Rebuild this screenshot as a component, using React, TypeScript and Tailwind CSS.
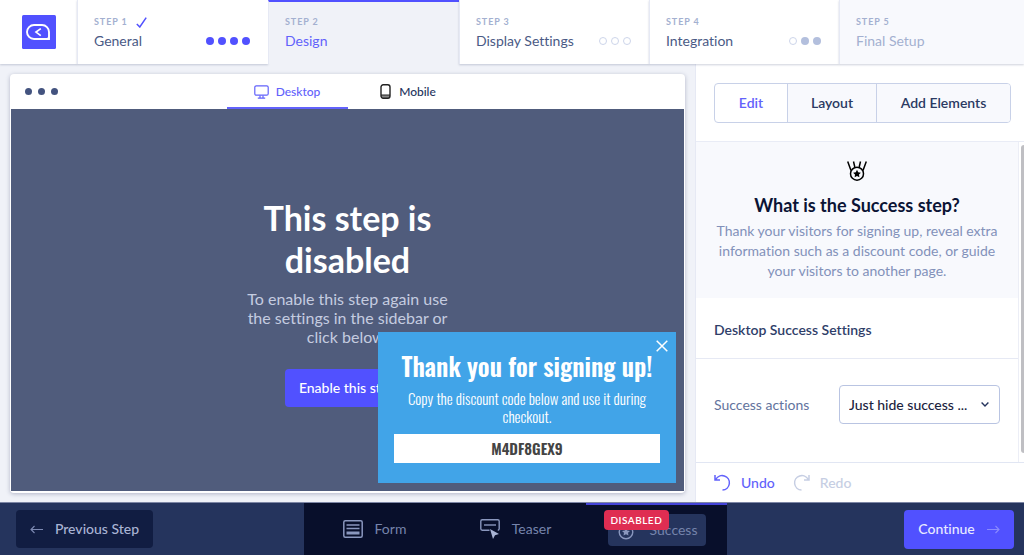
import React from "react";

type Dot = "done" | "open" | "partial";

type Step = {
  label: string;
  title: string;
  dots: Dot[];
  state: "complete" | "active" | "todo" | "locked";
};

const steps: Step[] = [
  { label: "STEP 1", title: "General", dots: ["done", "done", "done", "done"], state: "complete" },
  { label: "STEP 2", title: "Design", dots: [], state: "active" },
  { label: "STEP 3", title: "Display Settings", dots: ["open", "open", "open"], state: "todo" },
  { label: "STEP 4", title: "Integration", dots: ["open", "partial", "partial"], state: "todo" },
  { label: "STEP 5", title: "Final Setup", dots: [], state: "locked" },
];

const stepBox = {
  complete: "bg-white shadow-[0_1px_2px_rgba(60,70,110,0.25)]",
  active: "bg-[#f0f2f8] border-t-2 border-t-[#5151ff]",
  todo: "bg-white shadow-[0_1px_2px_rgba(60,70,110,0.25)]",
  locked: "bg-[#f8f9fd] shadow-[0_1px_2px_rgba(60,70,110,0.25)]",
};

const stepTitle = {
  complete: "text-[#4a5a85]",
  active: "text-[#6262fb]",
  todo: "text-[#4a5a85]",
  locked: "text-[#a3b0d0]",
};

const dotStyle = {
  done: "bg-[#5151ff]",
  open: "border border-[#cdd5ea]",
  partial: "bg-[#b3bfdd]",
};

function Logo() {
  return (
    <svg width="34" height="34" viewBox="0 0 34 34" fill="none" aria-hidden="true">
      <rect width="34" height="34" rx="1.500" fill="#5151ff" />
      <path d="M12 10h8a7 7 0 0 1 7 7v7H12a7 7 0 0 1 0-14Z" stroke="#fff" strokeWidth="1.900" />
      <path d="M27.500 19v5.500H20.500c3.500 0 6.500-2 7-5.500Z" fill="#fff" />
      <path d="m18.800 13.600-4.800 3.500 4.800 3.500" stroke="#fff" strokeWidth="1.700" />
    </svg>
  );
}

function Medal({ size }: { size: number }) {
  return (
    <svg width={size} height={size} viewBox="0 0 20 20" fill="none" stroke="currentColor" strokeWidth="1.500" aria-hidden="true">
      <circle cx="10" cy="12.700" r="6.500" />
      <path d="m.7.5 3.300 9M19.300.5l-3.300 9M6.500.5l1.300 5.500M13.500.5l-1.300 5.500" />
      <path d="m10 8.800 1.200 2.500 2.700.4-1.900 1.900.4 2.700-2.400-1.300-2.400 1.300.4-2.700-1.900-1.900 2.700-.4Z" fill="currentColor" stroke="none" />
    </svg>
  );
}

function StarBadge() {
  return (
    <svg width="16" height="16" viewBox="0 0 16 16" fill="none" aria-hidden="true">
      <circle cx="8" cy="8" r="6.800" stroke="#8a97be" strokeWidth="1.400" />
      <path d="m8 4 1.200 2.500 2.800.4-2 1.900.5 2.700L8 10.200l-2.500 1.300.5-2.700-2-1.900 2.800-.4Z" fill="#8a97be" />
    </svg>
  );
}

function Monitor() {
  return (
    <svg width="15" height="14" viewBox="0 0 15 14" fill="none" stroke="currentColor" strokeWidth="1.200" aria-hidden="true">
      <rect x=".8" y=".8" width="13.400" height="9.400" rx="1.500" />
      <path d="M6 10.500v2.500M9 10.500v2.500M3.800 13.200h7.400" />
    </svg>
  );
}

function Phone() {
  return (
    <svg width="11" height="15" viewBox="0 0 11 15" fill="none" aria-hidden="true">
      <path d="M1 11h9v1.500a2 2 0 0 1-2 2H3a2 2 0 0 1-2-2Z" fill="#888" />
      <rect x="1" y=".8" width="9" height="13.400" rx="2.200" stroke="#222" strokeWidth="1.400" />
      <path d="M1 11h9" stroke="#222" strokeWidth="1" />
    </svg>
  );
}

function FormIcon() {
  return (
    <svg width="20" height="18" viewBox="0 0 20 18" fill="none" stroke="#8a97be" aria-hidden="true">
      <rect x=".8" y=".8" width="18.400" height="16.400" rx="1.500" strokeWidth="1.500" />
      <path d="M3.500 5h13M3.500 8.500h13" strokeWidth="1.300" />
      <rect x="3.500" y="11.500" width="13" height="3" fill="#8a97be" stroke="none" />
    </svg>
  );
}

function TeaserIcon() {
  return (
    <svg width="20" height="20" viewBox="0 0 20 20" fill="none" stroke="#8a97be" aria-hidden="true">
      <path d="M9.500 11.200H2.200A1.400 1.400 0 0 1 .8 9.800V2.200A1.400 1.400 0 0 1 2.200.8h15.600a1.400 1.400 0 0 1 1.400 1.400v7.600a1.400 1.400 0 0 1-1.400 1.400" strokeWidth="1.400" />
      <path d="M4 6h12" strokeWidth="1.400" />
      <path d="m10 10 9 5-4 1.200-2 3.800Z" fill="#a9b4d4" stroke="none" />
    </svg>
  );
}

function Arrow({ left = false }: { left?: boolean }) {
  return (
    <svg width="13" height="9" viewBox="0 0 13 9" fill="none" stroke="currentColor" strokeWidth="1.100" aria-hidden="true">
      {left ? <path d="M13 4.500H1M4.500 1 1 4.500 4.500 8" /> : <path d="M0 4.500h12M8.500 1 12 4.500 8.500 8" />}
    </svg>
  );
}

function UndoIcon({ flip = false }: { flip?: boolean }) {
  return (
    <svg width="17" height="17" viewBox="0 0 17 17" fill="none" stroke="currentColor" strokeWidth="1.500" aria-hidden="true">
      {flip ? (
        <path d="M8.500 16A7.200 7.200 0 1 1 15.200 5.500M16 1v5h-5" />
      ) : (
        <path d="M8.500 16A7.200 7.200 0 1 0 1.800 5.500M1 1v5h5" />
      )}
    </svg>
  );
}

function Header() {
  return (
    <header className="relative z-10 grid h-16 grid-cols-[77px_191fr_191fr_190fr_190fr_185fr]">
      <a href="#home" aria-label="Home" className="flex items-center justify-center bg-white shadow-[0_1px_2px_rgba(60,70,110,0.25)]">
        <Logo />
      </a>
      {steps.map((s) => (
        <a
          key={s.label}
          href="#step"
          className={`flex flex-col border-l border-l-[#e6e9f4] pr-[18px] pl-4 ${s.state === "active" ? "pt-[14px]" : "pt-4"} ${stepBox[s.state]}`}
        >
          <span className="flex h-3 items-center gap-2 text-[9px] font-bold tracking-widest text-[#a3b0d0]">
            {s.label}
            {s.state === "complete" && (
              <svg width="11" height="11" viewBox="0 0 11 11" fill="none" stroke="#5151ff" strokeWidth="1.500" aria-hidden="true">
                <path d="m.8 7 3 3L10.200.6" />
              </svg>
            )}
          </span>
          <span className="mt-[3px] flex h-5 items-center justify-between">
            <span className={`text-sm leading-5 ${stepTitle[s.state]}`}>{s.title}</span>
            <span className="flex gap-1">
              {s.dots.map((d, i) => (
                <span key={i} className={`size-2 rounded-full ${dotStyle[d]}`} />
              ))}
            </span>
          </span>
        </a>
      ))}
    </header>
  );
}

function Popup() {
  return (
    <div className="absolute right-2 bottom-2 w-[298px] bg-[#41a4e8] px-4 pt-[18px] pb-5 text-center font-['Oswald',sans-serif] text-white">
      <button type="button" aria-label="Close" className="absolute top-2 right-2">
        <svg width="12" height="12" viewBox="0 0 12 12" stroke="#fff" strokeWidth="1.500" aria-hidden="true">
          <path d="m.7.700 10.600 10.600M11.300.7.7 11.300" />
        </svg>
      </button>
      <h2 className="text-[25px] leading-8 font-semibold whitespace-nowrap">Thank you for signing up!</h2>
      <p className="mt-[7px] text-[15px] leading-[18px] font-[350]">Copy the discount code below and use it during checkout.</p>
      <div className="mt-[9px] bg-white text-[15px] leading-[29px] font-semibold text-[#444]">M4DF8GEX9</div>
    </div>
  );
}

function Preview() {
  return (
    <section className="flex min-w-0 flex-1 flex-col px-[10px] pt-[10px] pb-[9px]">
      <div className="flex flex-1 flex-col rounded bg-white px-px pb-[2px] shadow-[0_1px_4px_rgba(60,70,110,0.35)]">
        <div className="grid h-[35px] grid-cols-[1fr_auto_1fr]">
          <div className="flex items-center gap-[6px] pl-[14px]">
            <span className="size-[7px] rounded-full bg-[#43537f]" />
            <span className="size-[7px] rounded-full bg-[#43537f]" />
            <span className="size-[7px] rounded-full bg-[#43537f]" />
          </div>
          <div className="flex text-xs font-medium">
            <button type="button" className="flex w-[121px] items-center justify-center gap-[7px] border-b-2 border-[#6262fb] pt-[2px] text-[#6262fb]">
              <Monitor />
              Desktop
            </button>
            <button type="button" className="flex w-[121px] items-center justify-center gap-2 border-b-2 border-transparent pt-[2px] text-[#25345d]">
              <Phone />
              Mobile
            </button>
          </div>
          <div />
        </div>
        <div className="relative flex flex-1 flex-col items-center bg-[#505c7c] pt-[88px] text-center">
          <h1 className="w-[200px] text-[34px] leading-[42px] font-bold text-white">This step is disabled</h1>
          <p className="mt-2 w-[210px] text-base leading-[19px] text-[#c5cce0]">
            To enable this step again use the settings in the sidebar or click below.
          </p>
          <button type="button" className="mt-[23px] h-[38px] rounded-sm bg-[#5151ff] px-[14px] text-sm font-medium text-white">
            Enable this step
          </button>
          <Popup />
        </div>
      </div>
    </section>
  );
}

function Sidebar() {
  return (
    <aside className="flex w-[329px] flex-col border-l border-[#e6e9f4] bg-white">
      <div className="border-b border-[#e9ecf6] pt-[19px] pr-[13px] pb-[18px] pl-[18px]">
        <div className="flex h-10 overflow-hidden rounded-sm border border-[#c8d1e8] text-sm font-semibold text-[#2b3a63]">
          <button type="button" className="w-[72px] text-[#6262fb]">Edit</button>
          <button type="button" className="w-[89px] border-l border-[#c8d1e8] bg-[#f8f9fd]">Layout</button>
          <button type="button" className="flex-1 border-l border-[#c8d1e8] bg-[#f8f9fd]">Add Elements</button>
        </div>
      </div>
      <div className="flex flex-1">
        <div className="min-w-0 flex-1 border-r border-[#eceef6]">
          <div className="flex flex-col items-center bg-[#f8f9fd] px-4 pt-[19px] pb-[17px] text-center">
            <Medal size={20} />
            <h2 className="mt-3 text-lg leading-6 font-bold text-[#0b1435]">What is the Success step?</h2>
            <p className="mt-1 text-sm leading-5 text-[#8291ba]">
              Thank your visitors for signing up, reveal extra information such as a discount code, or guide your visitors to another page.
            </p>
          </div>
          <h3 className="border-b border-[#e6e9f4] px-[18px] pt-[22px] pb-[18px] text-sm leading-5 font-semibold text-[#2f3e69]">Desktop Success Settings</h3>
          <div className="flex items-center justify-between px-[18px] py-[26px]">
            <label htmlFor="actions" className="text-sm text-[#63739d]">Success actions</label>
            <div className="relative w-[161px]">
              <select id="actions" className="h-[39px] w-full appearance-none rounded-sm border border-[#b9c4e2] bg-white pl-[9px] text-sm font-medium text-[#1b2340]">
                <option>Just hide success ...</option>
              </select>
              <svg className="pointer-events-none absolute top-4 right-[11px]" width="8" height="7" viewBox="0 0 8 7" fill="none" stroke="#25345d" strokeWidth="1.400" aria-hidden="true">
                <path d="m.6 1.500 3.400 3.400 3.400-3.400" />
              </svg>
            </div>
          </div>
        </div>
        <div className="w-[5px] pt-[3px] pb-[9px]">
          <div className="ml-[2px] h-full rounded-l-sm bg-[#bfbfc3]" />
        </div>
      </div>
      <div className="flex h-10 items-center gap-[18px] border-t border-[#e1e6f3] pl-[18px] text-sm font-medium">
        <button type="button" className="flex items-center gap-[10px] text-[#6262fb]">
          <UndoIcon />
          Undo
        </button>
        <button type="button" disabled className="flex items-center gap-[10px] text-[#c6cee3]">
          <UndoIcon flip />
          Redo
        </button>
      </div>
    </aside>
  );
}

function Footer() {
  return (
    <footer className="grid h-[53px] grid-cols-[304fr_423px_297fr] border-t border-[#7d86a5] bg-[#25345d] text-sm">
      <div className="flex items-center pl-4">
        <button type="button" className="flex h-[38px] w-[137px] items-center justify-center gap-3 rounded-sm bg-[#111d42] font-medium text-[#a9b4d4]">
          <span className="text-[#7d8ab3]"><Arrow left /></span>
          Previous Step
        </button>
      </div>
      <nav className="grid grid-cols-3 bg-[#080f2b] text-[#7684ac]">
        <a href="#form" className="flex items-center justify-center gap-3">
          <FormIcon />
          Form
        </a>
        <a href="#teaser" className="flex items-center justify-center gap-3">
          <TeaserIcon />
          Teaser
        </a>
        <a href="#success" className="flex items-center justify-center border-t-2 border-[#4343d8]">
          <span className="relative flex h-8 w-[98px] items-center justify-between rounded-sm bg-[#25345d] pr-2 pl-[10px]">
            <span className="mt-1"><StarBadge /></span>
            Success
            <span className="absolute -top-1 -left-1 rounded-sm bg-[#df2d52] px-[7px] text-[10px] leading-5 font-semibold tracking-wider text-white">
              DISABLED
            </span>
          </span>
        </a>
      </nav>
      <div className="flex items-center justify-end pr-[10px]">
        <button type="button" className="flex h-[39px] w-[110px] items-center justify-center gap-3 rounded-sm bg-[#5151ff] font-medium text-[#e8eaff]">
          Continue
          <span className="text-[#8a8aff]"><Arrow /></span>
        </button>
      </div>
    </footer>
  );
}

export default function App() {
  return (
    <div className="flex min-h-screen flex-col bg-[#f0f2f8] font-['Lato','Noto_Sans',sans-serif] [font-variant-ligatures:none]">
      <Header />
      <main className="flex flex-1">
        <Preview />
        <Sidebar />
      </main>
      <Footer />
    </div>
  );
}
